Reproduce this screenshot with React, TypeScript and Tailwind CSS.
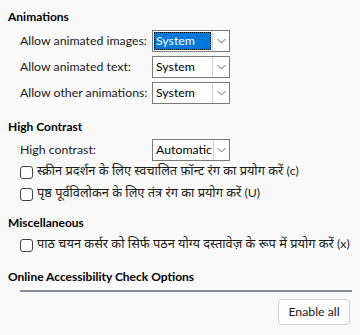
import React from "react";

const FONT = { fontFamily: 'Lato, "Noto Sans Devanagari", "Noto Sans", sans-serif' };
const HINDI = { fontFamily: '"Noto Sans Devanagari", "Noto Sans", Lato, sans-serif' };

function Chevron() {
	return (
		<svg width="9" height="6" viewBox="0 0 9 6" className="text-[#6b6b6b]">
			<path d="M0.5 1 L4.5 5 L8.5 1" fill="none" stroke="currentColor" strokeWidth="1" />
		</svg>
	);
}

function Dropdown({ value, focused }: { value: string; focused?: boolean }) {
	return (
		<div className="flex h-[22px] w-[78px] border border-[#7a7a7a] bg-white">
			<div className="flex flex-1 p-px">
				{focused ? (
					<div className="flex flex-1 items-center border border-dotted border-black bg-[#0078d7] pl-px text-white">
						{value}
					</div>
				) : (
					<div className="flex flex-1 items-center pl-[2px] text-black">{value}</div>
				)}
			</div>
			<div className="flex w-[17px] items-center justify-center border-l border-[#d0d0d0]">
				<Chevron />
			</div>
		</div>
	);
}

function Check({ label, suffix }: { label: string; suffix: string }) {
	return (
		<div className="flex h-[22px] items-center gap-[4px] pl-[12px]">
			<div className="h-[13px] w-[13px] shrink-0 rounded-[3px] border border-[#444] bg-white" />
			<span className="whitespace-nowrap text-[#1a1a1a]">
				<span style={HINDI} className="text-[12.8px]">{label}</span> {suffix}
			</span>
		</div>
	);
}

function Heading({ text, className = "" }: { text: string; className?: string }) {
	return <div className={`h-[22px] text-[12px] leading-[22px] font-bold text-black ${className}`}>{text}</div>;
}

function Row({ label, children }: { label: string; children: React.ReactNode }) {
	return (
		<div className="flex h-[22px] items-center pl-[12px]">
			<span className="w-[132px] whitespace-nowrap text-[#1a1a1a]">{label}</span>
			{children}
		</div>
	);
}

export default function App() {
	return (
		<div style={FONT} className="flex h-[335px] w-[360px] flex-col overflow-hidden bg-[#f9f9f9] px-2 pt-[6px] text-[12.3px]">
			<Heading text="Animations" />
			<div className="mt-[2px] flex flex-col gap-[4px]">
				<Row label="Allow animated images:">
					<Dropdown value="System" focused />
				</Row>
				<Row label="Allow animated text:">
					<Dropdown value="System" />
				</Row>
				<Row label="Allow other animations:">
					<Dropdown value="System" />
				</Row>
			</div>

			<Heading text="High Contrast" className="mt-[12px]" />
			<div className="mt-px">
				<Row label="High contrast:">
					<Dropdown value="Automatic" />
				</Row>
			</div>
			<Check label="स्क्रीन प्रदर्शन के लिए स्वचालित फ़ॉन्ट रंग का प्रयोग करें" suffix="(c)" />
			<Check label="पृष्ठ पूर्वविलोकन के लिए तंत्र रंग का प्रयोग करें" suffix="(U)" />

			<Heading text="Miscellaneous" className="mt-[7px]" />
			<Check label="पाठ चयन कर्सर को सिर्फ पठन योग्य दस्तावेज़ के रूप में प्रयोग करें" suffix="(x)" />

			<Heading text="Online Accessibility Check Options" className="mt-[10px]" />
			<div className="ml-[12px] mt-[2px] h-[2px] bg-[#8a8c93]" />
			<div className="mt-[7px] flex justify-end pr-[2px]">
				<button className="h-[26px] w-[72px] rounded-[4px] border border-[#d0d0d0] bg-[#fdfdfd] text-[#1a1a1a]">
					Enable all
				</button>
			</div>
		</div>
	);
}
